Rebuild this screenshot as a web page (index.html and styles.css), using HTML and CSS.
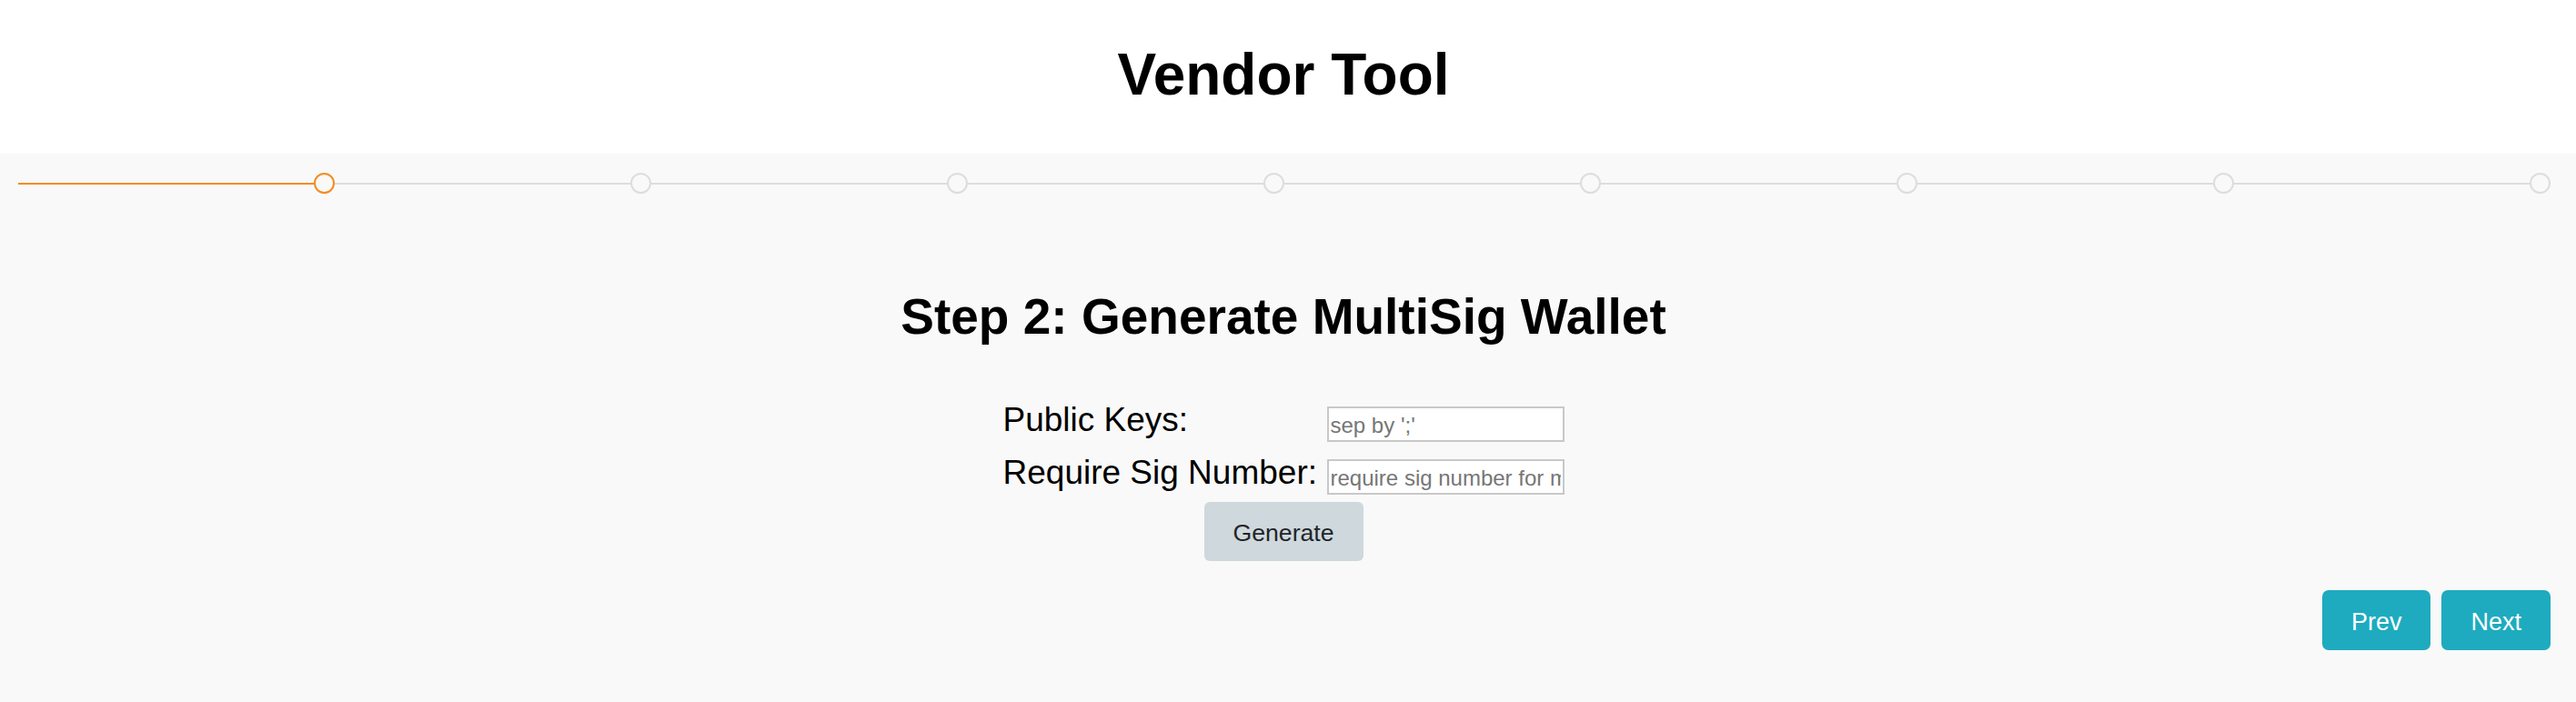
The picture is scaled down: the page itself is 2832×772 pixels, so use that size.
FILE: index.html
```html
<!DOCTYPE html>
<html lang="en">
<head>
<meta charset="utf-8">
<title>Vendor Tool</title>
<link rel="stylesheet" href="styles.css">
</head>
<body>
<header class="top">
  <h1 class="app-title">Vendor Tool</h1>
</header>
<main class="panel">
  <div class="steps">
    <span class="seg seg-done"></span><span class="dot dot-active"></span>
    <span class="seg"></span><span class="dot"></span>
    <span class="seg"></span><span class="dot"></span>
    <span class="seg"></span><span class="dot"></span>
    <span class="seg"></span><span class="dot"></span>
    <span class="seg"></span><span class="dot"></span>
    <span class="seg"></span><span class="dot"></span>
    <span class="seg"></span><span class="dot"></span>
  </div>
  <section class="step">
    <h2 class="step-title">Step 2: Generate MultiSig Wallet</h2>
    <div class="form">
      <label class="field-label" for="pk">Public Keys:</label>
      <input class="field-input" id="pk" type="text" placeholder="sep by ';'">
      <label class="field-label" for="sig">Require Sig Number:</label>
      <input class="field-input" id="sig" type="text" placeholder="require sig number for multisig">
    </div>
    <button class="btn-generate" type="button">Generate</button>
  </section>
  <div class="nav">
    <button class="btn-nav" type="button">Prev</button>
    <button class="btn-nav" type="button">Next</button>
  </div>
</main>
</body>
</html>
```
FILE: styles.css
```css
html, body {
  margin: 0;
  padding: 0;
  background: #f9f9f9;
  font-family: "Liberation Sans", Arial, sans-serif;
  color: #000;
}

.top {
  background: #ffffff;
  padding: 45px 10px 50px 0;
}

.app-title {
  margin: 0;
  text-align: center;
  font-size: 64px;
  line-height: 74px;
  font-weight: 700;
}

.panel {
  background: #f9f9f9;
  min-height: 603px;
  padding-right: 10px;
  overflow: hidden;
}

.steps {
  display: flex;
  align-items: center;
  height: 23px;
  margin-top: 21px;
  padding: 0 18px 0 20px;
}

.seg {
  flex: 1;
  height: 2px;
  background: #dddddd;
}

.seg-done {
  background: #f68b1f;
}

.dot {
  width: 23px;
  height: 23px;
  box-sizing: border-box;
  border: 2px solid #dddddd;
  border-radius: 50%;
  background: #f9f9f9;
  flex: none;
}

.dot-active {
  border-color: #f68b1f;
}

.step {
  display: flex;
  flex-direction: column;
  align-items: center;
}

.step-title {
  margin: 104px 0 0;
  font-size: 55px;
  line-height: 62px;
  font-weight: 700;
  text-align: center;
}

.form {
  display: grid;
  grid-template-columns: 356px 261px;
  row-gap: 19px;
  margin-top: 68px;
}

.field-label {
  font-size: 37px;
  line-height: 30px;
  align-self: start;
  white-space: nowrap;
}

.field-input {
  box-sizing: border-box;
  width: 261px;
  height: 39px;
  margin: 0;
  padding: 2px 2px 0;
  border: 2px solid #c8c8c8;
  background: #ffffff;
  font-family: "Liberation Sans", Arial, sans-serif;
  font-size: 24px;
  color: #000;
  outline: none;
}

.field-input::placeholder {
  color: #767676;
}

.btn-generate {
  margin-top: 8px;
  width: 175px;
  height: 65px;
  padding: 3px 0 0;
  border: none;
  border-radius: 6px;
  background: #cfd8dc;
  color: #212529;
  font-family: "Liberation Sans", Arial, sans-serif;
  font-size: 26.67px;
  cursor: pointer;
}

.nav {
  display: flex;
  justify-content: flex-end;
  gap: 12px;
  margin-top: 32.3px;
  padding-right: 18px;
}

.btn-nav {
  height: 66px;
  padding: 4px 32px 0;
  border: none;
  border-radius: 7px;
  background: #1eabbf;
  color: #ffffff;
  font-family: "Liberation Sans", Arial, sans-serif;
  font-size: 27px;
  cursor: pointer;
}
```
